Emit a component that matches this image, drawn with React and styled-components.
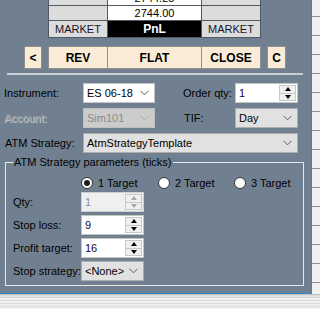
import React from 'react';
import styled, { createGlobalStyle } from 'styled-components';

const GlobalStyle = createGlobalStyle`
  html, body { margin: 0; padding: 0; }
  body {
    width: 320px;
    height: 309px;
    overflow: hidden;
    background: #f0f0f0;
    font-family: "Liberation Sans", Arial, sans-serif;
    font-size: 11px;
    color: #000;
  }
`;

const Screen = styled.div`
  display: grid;
  grid-template-columns: 312px 8px;
  grid-template-rows: 294px 15px;
  width: 320px;
  height: 309px;
`;

const Window = styled.div`
  background: #708090;
  border-right: 1px solid #2f86d6;
  border-bottom: 1px solid #2f86d6;
  overflow: hidden;
  display: flex;
  flex-direction: column;
`;

const BackGrid = styled.div`
  background: repeating-linear-gradient(
    to bottom,
    #f0f0f0 0 16px,
    #8e8e8e 16px 17px,
    #f0f0f0 17px 19px
  );
`;

const BackStripes = styled.div`
  grid-column: 1 / span 2;
  background:
    linear-gradient(to bottom, rgba(0, 0, 0, 0.12), rgba(0, 0, 0, 0) 4px),
    repeating-linear-gradient(to bottom, #d9d9d9 0 1px, #efefef 1px 3px);
`;

/* ---- price ladder ---- */

const Board = styled.div`
  display: grid;
  grid-template-columns: 58px 93px 58px;
  grid-template-rows: 14px 14px 16px;
  gap: 1px;
  width: max-content;
  margin: -10px 0 0 48px;
  background: #4f5a66;
  border: 1px solid #4f5a66;
`;

const tones = {
  gray: { bg: '#dcdcdc', fg: '#14142a', weight: 400 },
  white: { bg: '#ffffff', fg: '#000000', weight: 400 },
  black: { bg: '#000000', fg: '#ffffff', weight: 700 },
};

const Cell = styled.div`
  display: flex;
  align-items: center;
  justify-content: center;
  background: ${(p) => tones[p.$tone].bg};
  color: ${(p) => tones[p.$tone].fg};
  font-weight: ${(p) => tones[p.$tone].weight};
  font-size: ${(p) => (p.$tone === 'black' ? '12px' : '11px')};
  line-height: 1;
`;

/* ---- order buttons ---- */

const ButtonRow = styled.div`
  display: flex;
  gap: 6px;
  margin-top: 8px;
  padding-left: 24px;
  height: 23px;
`;

const ButtonGroup = styled.div`
  display: grid;
  grid-template-columns: 58px 93px 58px;
  gap: 1px;
  background: #8e8e8e;
  border: 1px solid #8e8e8e;
`;

const OrderButton = styled.div`
  display: flex;
  align-items: center;
  justify-content: center;
  background: #faebd7;
  font-size: 12px;
  font-weight: 700;
  ${(p) => p.$single && `
    width: ${p.$single}px;
    border: 1px solid #8e8e8e;
    box-sizing: border-box;
  `}
`;

const Divider = styled.div`
  height: 2px;
  width: 296px;
  margin: 4px 0 0 7px;
  background: #c9ced3;
`;

/* ---- form ---- */

const Form = styled.div`
  display: grid;
  grid-template-columns: 79px 72px 80px 63px;
  grid-auto-rows: 20px;
  row-gap: 5px;
  margin-top: 8px;
  padding-left: 4px;
`;

const Label = styled.div`
  display: flex;
  align-items: center;
  white-space: nowrap;
  padding-left: ${(p) => p.$indent || 0}px;
  color: ${(p) => (p.$disabled ? '#9c9c9c' : '#000')};
  text-shadow: ${(p) => (p.$disabled ? '1px 1px 0 #c4c9ce' : 'none')};
`;

const comboKinds = {
  edit: { bg: '#ffffff', border: '#c4c4c4', fg: '#000' },
  list: { bg: '#e1e1e1', border: '#adadad', fg: '#000' },
  disabled: { bg: '#cccccc', border: '#bfbfbf', fg: '#8a8a8a' },
};

const ComboBox = styled.div`
  grid-column: ${(p) => p.$span || 'auto'};
  display: flex;
  align-items: center;
  justify-content: space-between;
  box-sizing: border-box;
  height: 20px;
  padding: 0 5px 0 3px;
  background: ${(p) => comboKinds[p.$kind].bg};
  border: 1px solid ${(p) => comboKinds[p.$kind].border};
  color: ${(p) => comboKinds[p.$kind].fg};
  white-space: nowrap;
  overflow: hidden;
`;

const Chevron = ({ color = '#5c5c5c' }) => (
  <svg width="9" height="6" viewBox="0 0 9 6">
    <path d="M0.5 0.8 L4.5 4.8 L8.5 0.8" fill="none" stroke={color} strokeWidth="1" />
  </svg>
);

const Combo = ({ kind, span, children }) => (
  <ComboBox $kind={kind} $span={span}>
    <span>{children}</span>
    <Chevron color={kind === 'disabled' ? '#a8a8a8' : '#5c5c5c'} />
  </ComboBox>
);

const SpinBox = styled.div`
  display: flex;
  box-sizing: border-box;
  height: 20px;
  background: ${(p) => (p.$disabled ? '#efefef' : '#ffffff')};
  border: 1px solid ${(p) => (p.$disabled ? '#cfcfcf' : '#c4c4c4')};
  color: ${(p) => (p.$disabled ? '#8f8a98' : '#14082e')};
`;

const SpinValue = styled.div`
  flex: 1;
  display: flex;
  align-items: center;
  padding-left: 3px;
`;

const SpinButtons = styled.div`
  display: grid;
  grid-template-rows: 1fr 1fr;
  gap: 1px;
  width: 15px;
  margin: 1px 1px 1px 0;
  background: #c8c8c8;
  border: 1px solid #c8c8c8;
`;

const SpinArrow = styled.div`
  display: flex;
  align-items: center;
  justify-content: center;
  background: #f0f0f0;
  &::after {
    content: '';
    border-left: 3.5px solid transparent;
    border-right: 3.5px solid transparent;
    ${(p) => (p.$down ? 'border-top' : 'border-bottom')}: 4px solid ${(p) => (p.$disabled ? '#a6a6a6' : '#000')};
  }
`;

const Spinner = ({ value, disabled }) => (
  <SpinBox $disabled={disabled}>
    <SpinValue>{value}</SpinValue>
    <SpinButtons>
      <SpinArrow $disabled={disabled} />
      <SpinArrow $down $disabled={disabled} />
    </SpinButtons>
  </SpinBox>
);

/* ---- ATM parameters group ---- */

const Group = styled.fieldset`
  margin: 3px 7px 0 5px;
  padding: 0 7px 4px;
  border: 1px solid #e6e8ea;
  min-width: 0;
`;

const Legend = styled.legend`
  padding: 0 1px;
  line-height: 13px;
`;

const Params = styled.div`
  display: grid;
  grid-template-columns: 68px 63px;
  grid-template-rows: 13px repeat(4, 20px);
  row-gap: 3px;
  padding-top: 7px;
`;

const RadioRow = styled.div`
  grid-column: 2;
  display: grid;
  grid-template-columns: 77px 76px auto;
  white-space: nowrap;
`;

const RadioItem = styled.div`
  display: flex;
  align-items: center;
  gap: 5px;
`;

const RadioDot = styled.span`
  box-sizing: border-box;
  width: 12px;
  height: 12px;
  border-radius: 50%;
  border: 1px solid #333;
  background: #fff;
  display: flex;
  align-items: center;
  justify-content: center;
  &::after {
    content: '';
    width: 6px;
    height: 6px;
    border-radius: 50%;
    background: ${(p) => (p.$checked ? '#1a1a1a' : 'transparent')};
  }
`;

const Radio = ({ checked, children }) => (
  <RadioItem>
    <RadioDot $checked={checked} />
    <span>{children}</span>
  </RadioItem>
);

export default function App() {
  return (
    <>
      <GlobalStyle />
      <Screen>
        <Window>
          <Board>
            <Cell $tone="gray" />
            <Cell $tone="white">2744.25</Cell>
            <Cell $tone="gray" />
            <Cell $tone="gray" />
            <Cell $tone="white">2744.00</Cell>
            <Cell $tone="gray" />
            <Cell $tone="gray">MARKET</Cell>
            <Cell $tone="black">PnL</Cell>
            <Cell $tone="gray">MARKET</Cell>
          </Board>

          <ButtonRow>
            <OrderButton $single={18}>&lt;</OrderButton>
            <ButtonGroup>
              <OrderButton>REV</OrderButton>
              <OrderButton>FLAT</OrderButton>
              <OrderButton>CLOSE</OrderButton>
            </ButtonGroup>
            <OrderButton $single={19}>C</OrderButton>
          </ButtonRow>

          <Divider />

          <Form>
            <Label>Instrument:</Label>
            <Combo kind="edit">ES 06-18</Combo>
            <Label $indent={28}>Order qty:</Label>
            <Spinner value="1" />

            <Label $disabled>Account:</Label>
            <Combo kind="disabled">Sim101</Combo>
            <Label $indent={29}>TIF:</Label>
            <Combo kind="list">Day</Combo>

            <Label $indent={1}>ATM Strategy:</Label>
            <Combo kind="list" span="2 / span 3">AtmStrategyTemplate</Combo>
          </Form>

          <Group>
            <Legend>ATM Strategy parameters (ticks)</Legend>
            <Params>
              <RadioRow>
                <Radio checked>1 Target</Radio>
                <Radio>2 Target</Radio>
                <Radio>3 Target</Radio>
              </RadioRow>

              <Label>Qty:</Label>
              <Spinner value="1" disabled />

              <Label>Stop loss:</Label>
              <Spinner value="9" />

              <Label>Profit target:</Label>
              <Spinner value="16" />

              <Label>Stop strategy:</Label>
              <Combo kind="list">&lt;None&gt;</Combo>
            </Params>
          </Group>
        </Window>
        <BackGrid />
        <BackStripes />
      </Screen>
    </>
  );
}
